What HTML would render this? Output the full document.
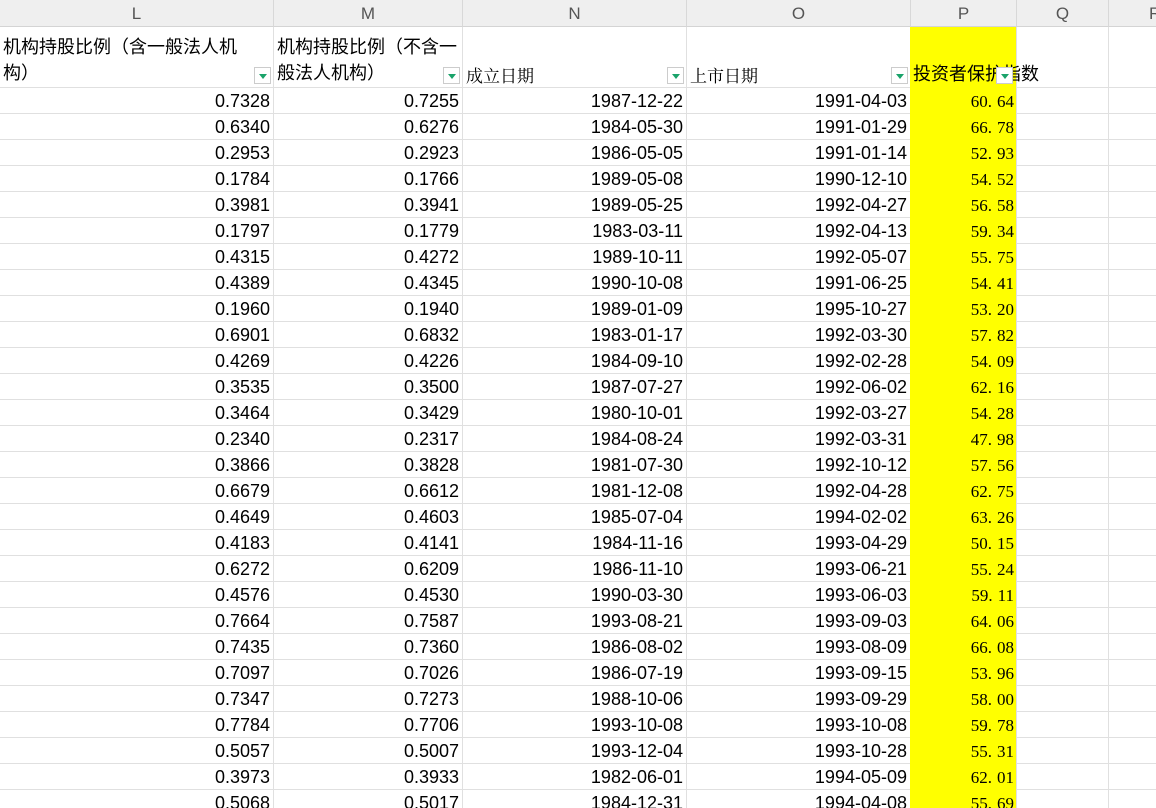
<html style="overflow:hidden"><head><style>
html,body{margin:0;width:1156px;height:808px;overflow:hidden}
body{background:#fff;font-family:"Liberation Sans","Noto Sans CJK SC",sans-serif;position:relative}
.h{position:absolute;top:0;height:27px;background:#efefef;border-right:1px solid #d8d8d8;border-bottom:1px solid #d4d4d4;box-sizing:border-box;text-align:center;line-height:27px;color:#555;font-size:17px;z-index:3}
.vl{position:absolute;top:27px;bottom:0;width:1px;background:#e0e0e0}
.hl{position:absolute;left:0;width:910px;height:1px;background:#e0e0e0}
.hr{position:absolute;left:1016px;right:0;height:1px;background:#e0e0e0}
.c{position:absolute;font-size:18px;color:#000;text-align:right;height:26px;line-height:27px;white-space:nowrap}
.p{font-family:"Liberation Serif","Noto Serif CJK SC",serif;font-size:17px}
.p i{font-style:normal;letter-spacing:5px}
.f{position:absolute;width:17px;height:17px;border:1px solid #ccc;background:#fff;box-sizing:border-box;z-index:2}
.f:after{content:"";position:absolute;left:4px;top:6px;border-left:4px solid transparent;border-right:4px solid transparent;border-top:5px solid #1aa36a}
.t{position:absolute;font-size:18px;line-height:26px;color:#000;white-space:nowrap}
</style></head><body>
<div id="rows"></div>
<div style="position:absolute;left:910px;top:27px;width:106px;height:781px;background:#ffff00"></div>
<div class="h" style="left:0;width:274px">L</div>
<div class="h" style="left:274px;width:189px">M</div>
<div class="h" style="left:463px;width:224px">N</div>
<div class="h" style="left:687px;width:224px">O</div>
<div class="h" style="left:911px;width:106px">P</div>
<div class="h" style="left:1017px;width:92px">Q</div>
<div class="h" style="left:1109px;width:60px;text-align:left;padding-left:40px">R</div>
<div class="vl" style="left:273px"></div><div class="vl" style="left:462px"></div><div class="vl" style="left:686px"></div><div class="vl" style="left:1016px"></div><div class="vl" style="left:1108px"></div>
<div class="t" style="left:3px;top:34px">机构持股比例（含一般法人机<br>构）</div>
<div class="t" style="left:277px;top:34px">机构持股比例（不含一<br>般法人机构）</div>
<div class="t" style="left:466px;top:62px;font-family:'Noto Serif CJK SC',serif;font-size:17px">成立日期</div>
<div class="t" style="left:690px;top:62px;font-family:'Noto Serif CJK SC',serif;font-size:17px">上市日期</div>
<div class="t" style="left:913px;top:61px;z-index:1">投资者保护指数</div>
<div class="f" style="left:254px;top:67px"></div>
<div class="f" style="left:443px;top:67px"></div>
<div class="f" style="left:667px;top:67px"></div>
<div class="f" style="left:891px;top:67px"></div>
<div class="f" style="left:996px;top:67px"></div>
<div id="vals"></div>
<script>
var d=[["0.7328","0.7255","1987-12-22","1991-04-03","60.64"],["0.6340","0.6276","1984-05-30","1991-01-29","66.78"],["0.2953","0.2923","1986-05-05","1991-01-14","52.93"],["0.1784","0.1766","1989-05-08","1990-12-10","54.52"],["0.3981","0.3941","1989-05-25","1992-04-27","56.58"],["0.1797","0.1779","1983-03-11","1992-04-13","59.34"],["0.4315","0.4272","1989-10-11","1992-05-07","55.75"],["0.4389","0.4345","1990-10-08","1991-06-25","54.41"],["0.1960","0.1940","1989-01-09","1995-10-27","53.20"],["0.6901","0.6832","1983-01-17","1992-03-30","57.82"],["0.4269","0.4226","1984-09-10","1992-02-28","54.09"],["0.3535","0.3500","1987-07-27","1992-06-02","62.16"],["0.3464","0.3429","1980-10-01","1992-03-27","54.28"],["0.2340","0.2317","1984-08-24","1992-03-31","47.98"],["0.3866","0.3828","1981-07-30","1992-10-12","57.56"],["0.6679","0.6612","1981-12-08","1992-04-28","62.75"],["0.4649","0.4603","1985-07-04","1994-02-02","63.26"],["0.4183","0.4141","1984-11-16","1993-04-29","50.15"],["0.6272","0.6209","1986-11-10","1993-06-21","55.24"],["0.4576","0.4530","1990-03-30","1993-06-03","59.11"],["0.7664","0.7587","1993-08-21","1993-09-03","64.06"],["0.7435","0.7360","1986-08-02","1993-08-09","66.08"],["0.7097","0.7026","1986-07-19","1993-09-15","53.96"],["0.7347","0.7273","1988-10-06","1993-09-29","58.00"],["0.7784","0.7706","1993-10-08","1993-10-08","59.78"],["0.5057","0.5007","1993-12-04","1993-10-28","55.31"],["0.3973","0.3933","1982-06-01","1994-05-09","62.01"],["0.5068","0.5017","1984-12-31","1994-04-08","55.69"]];
var R=[270,459,683,907,1014],h='<div class="hl" style="top:87px"></div><div class="hr" style="top:87px"></div>',v='';
d.forEach(function(r,i){var y=88+i*26;h+='<div class="hl" style="top:'+(y+25)+'px"></div><div class="hr" style="top:'+(y+25)+'px"></div>';
r.forEach(function(x,j){v+='<div class="c'+(j==4?' p':'')+'" style="top:'+y+'px;right:'+(1156-R[j])+'px">'+(j==4?x.replace('.','<i>.</i>'):x)+'</div>';});});
document.getElementById('rows').innerHTML=h;document.getElementById('vals').innerHTML=v;
</script>
</body></html>
